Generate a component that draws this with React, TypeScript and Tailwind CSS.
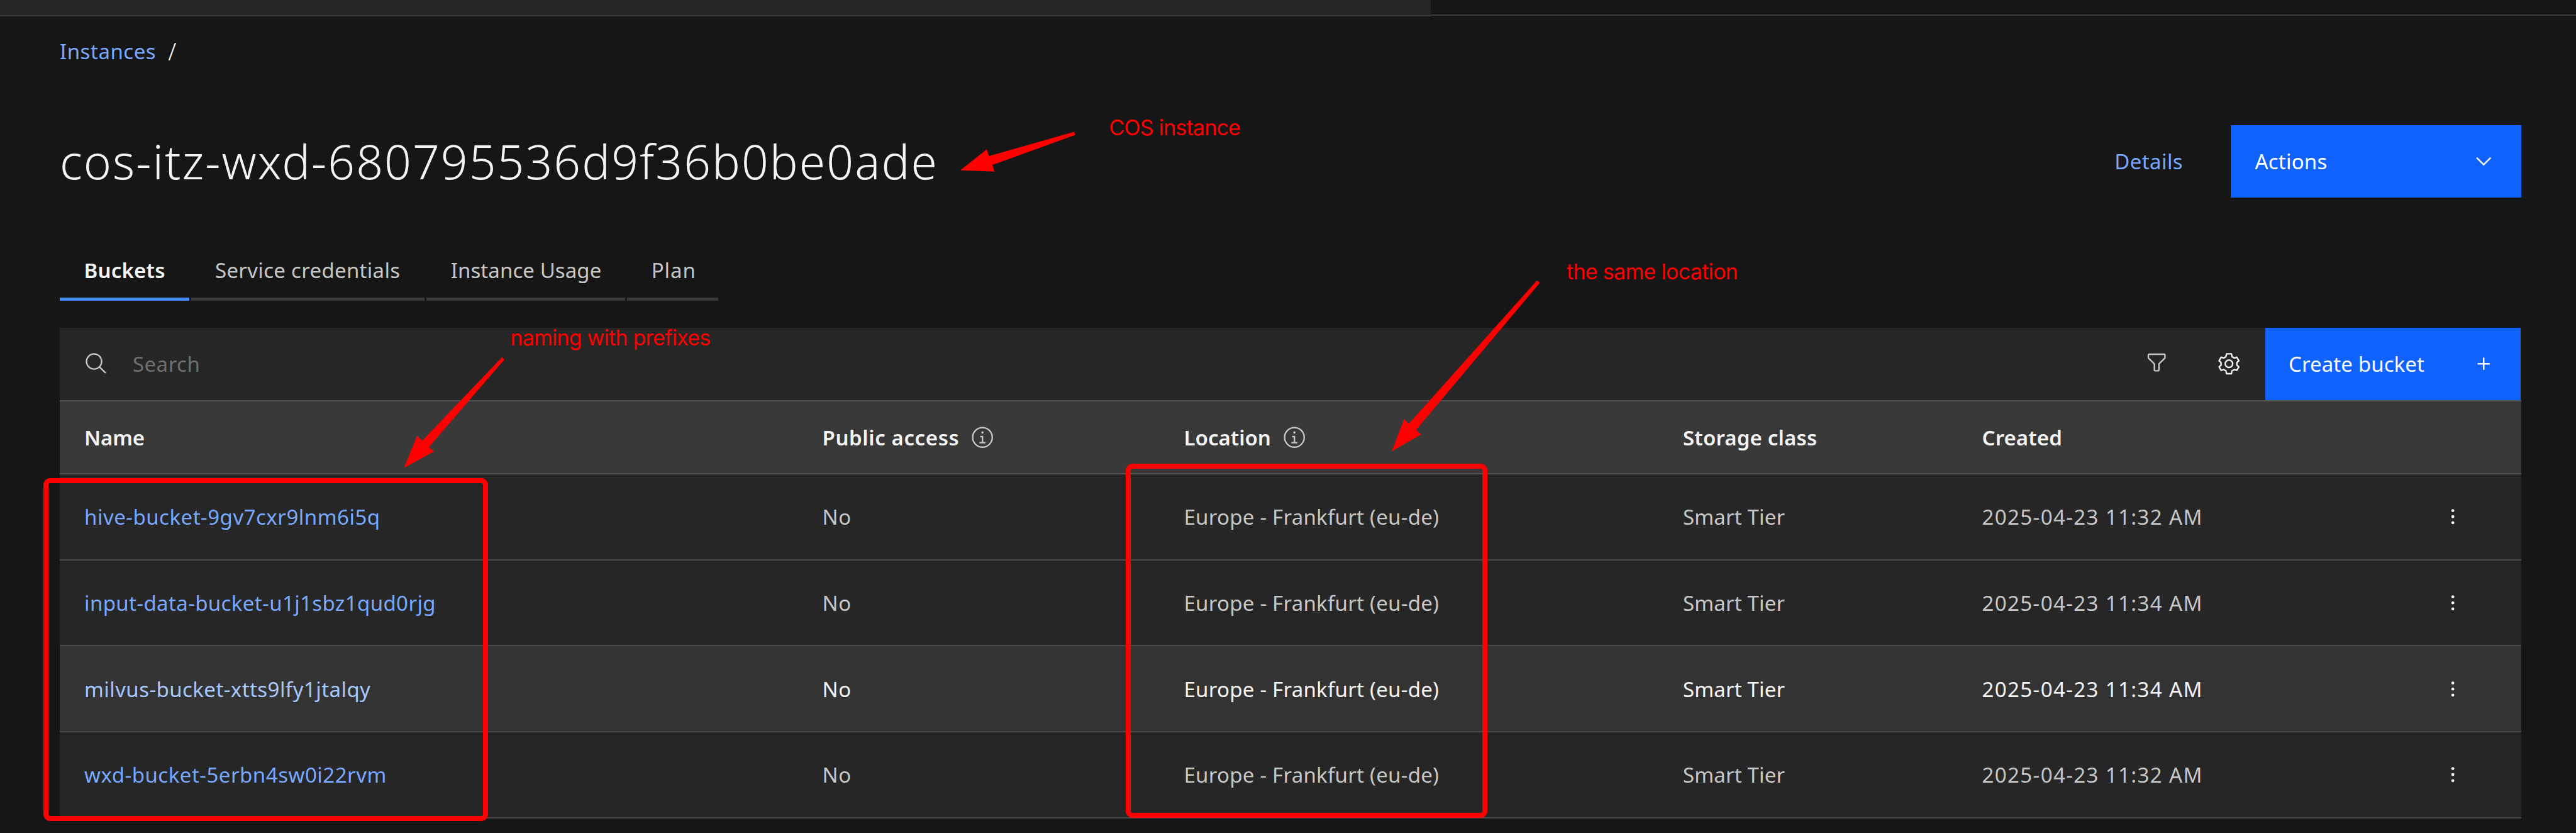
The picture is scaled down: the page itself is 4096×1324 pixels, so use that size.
import type { ReactNode } from "react";

type IconProps = { className?: string; children: ReactNode; box?: string };

function Icon({ className = "", children, box = "0 0 32 32" }: IconProps) {
  return (
    <svg viewBox={box} fill="currentColor" className={`size-[38.4px] shrink-0 ${className}`} aria-hidden="true">
      {children}
    </svg>
  );
}

function InfoIcon() {
  return (
    <Icon className="text-[#c6c6c6]">
      <path d="M17 22V14H13v2h2v6H12v2h8V22zM16 8a1.5 1.5 0 1 0 1.5 1.5A1.5 1.5 0 0 0 16 8z" />
      <path d="M16 30A14 14 0 1 1 30 16 14 14 0 0 1 16 30zM16 4A12 12 0 1 0 28 16 12 12 0 0 0 16 4z" />
    </Icon>
  );
}

function SearchIcon() {
  return (
    <Icon className="text-[#c6c6c6]">
      <path d="M29 27.586l-7.552-7.552a11.018 11.018 0 1 0-1.414 1.414L27.586 29zM4 13a9 9 0 1 1 9 9 9.01 9.01 0 0 1-9-9z" />
    </Icon>
  );
}

function FilterIcon() {
  return (
    <Icon className="-mt-[5px] text-[#c6c6c6]">
      <path d="M18 28H14a2 2 0 0 1-2-2V18.41L4.59 11A2 2 0 0 1 4 9.59V6A2 2 0 0 1 6 4H26a2 2 0 0 1 2 2V9.59A2 2 0 0 1 27.41 11L20 18.41V26A2 2 0 0 1 18 28zM6 6V9.59l8 8V26h4V17.59l8-8V6z" />
    </Icon>
  );
}

function SettingsIcon() {
  return (
    <Icon box="0 0 16 16" className="text-[#f4f4f4]">
      <path
        fill="none"
        stroke="currentColor"
        strokeWidth="1"
        strokeLinejoin="round"
        d="M6.4 1.4h3.2l.45 1.95q.75.3 1.4.85l1.75-.55 1.35 2.3-1.35 1.25q.15.8 0 1.6l1.35 1.25-1.35 2.3-1.75-.55q-.65.55-1.4.85l-.45 1.95h-3.2l-.45-1.95q-.75-.3-1.4-.85l-1.75.55-1.35-2.3 1.35-1.25q-.15-.8 0-1.6L1.45 5.95l1.35-2.3 1.75.55q.65-.55 1.4-.85z"
      />
      <circle cx="8" cy="8" r="2.45" fill="none" stroke="currentColor" strokeWidth="1" />
    </Icon>
  );
}

function ChevronIcon() {
  return (
    <Icon box="0 0 16 16">
      <path d="M8 11L3 6l.7-.7L8 9.6l4.3-4.3.7.7z" />
    </Icon>
  );
}

function AddIcon() {
  return (
    <Icon>
      <path d="M17 15V8H15v7H8v2h7v7h2V17h7V15z" />
    </Icon>
  );
}

function OverflowIcon() {
  return (
    <Icon className="text-[#f4f4f4]">
      <circle cx="16" cy="8" r="2" />
      <circle cx="16" cy="16" r="2" />
      <circle cx="16" cy="24" r="2" />
    </Icon>
  );
}

const tabs = [
  { label: "Buckets", look: "w-[205.5px] border-[#4589ff] font-semibold text-[#f4f4f4] tracking-[0.2px]" },
  { label: "Service credentials", look: "w-[371.7px] border-[#393939] text-[#c6c6c6] tracking-[0.3px]" },
  { label: "Instance Usage", look: "w-[316px] border-[#393939] text-[#c6c6c6] tracking-[0.08px]" },
  { label: "Plan", look: "w-[145px] border-[#393939] text-[#c6c6c6] tracking-[0.9px]" },
];

const buckets = [
  { name: "hive-bucket-9gv7cxr9lnm6i5q", track: "tracking-[0.5px]", created: "2025-04-23 11:32 AM", active: false },
  { name: "input-data-bucket-u1j1sbz1qud0rjg", track: "tracking-[0.38px]", created: "2025-04-23 11:34 AM", active: false },
  { name: "milvus-bucket-xtts9lfy1jtalqy", track: "tracking-[0.43px]", created: "2025-04-23 11:34 AM", active: true },
  { name: "wxd-bucket-5erbn4sw0i22rvm", track: "tracking-[0.5px]", created: "2025-04-23 11:32 AM", active: false },
];

const columns =
  "grid grid-cols-[1173.5px_575px_793.5px_475.5px_1fr_auto] items-center pl-[39px] pr-[89.5px]";

function TopBar() {
  return (
    <div className="flex h-[26px] items-start">
      <div className="h-[26px] w-[2275px] border-b-2 border-[#393939] bg-[#262626]" />
      <div className="h-[25px] flex-1 border-b-2 border-[#393939]" />
    </div>
  );
}

function Header() {
  return (
    <header className="mt-[97px] flex h-[116px] items-center">
      <h1 className="flex-1 text-[75px] leading-[90px] font-[350] tracking-[2.05px]">
        cos-itz-wxd-680795536d9f36b0be0ade
      </h1>
      <a className="mr-[76px] pt-px tracking-[0.4px] text-[#78a9ff]">Details</a>
      <button className="flex h-[115px] w-[462px] items-center justify-between bg-[#0f62fe] pr-[40.5px] pl-[38.5px] text-white">
        <span className="pt-px tracking-[0.2px]">Actions</span>
        <ChevronIcon />
      </button>
    </header>
  );
}

function Tabs() {
  return (
    <nav className="mt-[66px] flex gap-[3px]">
      {tabs.map((t) => (
        <div
          key={t.label}
          className={`flex h-[98px] items-center border-b-[5px] pt-[6px] pl-[38.5px] whitespace-nowrap ${t.look}`}
        >
          {t.label}
        </div>
      ))}
    </nav>
  );
}

function Toolbar() {
  return (
    <div className="mt-[43px] mr-px flex h-[115px] items-center bg-[#262626]">
      <div className="flex flex-1 items-center gap-[38.5px] pl-[39px] text-[#6f6f6f]">
        <SearchIcon />
        <span className="pt-px tracking-[0.5px]">Search</span>
      </div>
      <div className="grid w-[115px] place-items-center">
        <FilterIcon />
      </div>
      <div className="grid w-[115px] place-items-center">
        <SettingsIcon />
      </div>
      <button className="flex h-full w-[406px] items-center justify-between bg-[#0f62fe] pr-[39.5px] pl-[37px] text-white">
        <span className="pt-px tracking-[0.1px]">Create bucket</span>
        <AddIcon />
      </button>
    </div>
  );
}

function BucketTable() {
  return (
    <section>
      <div className={`${columns} h-[118px] border-y-2 border-[#525252] bg-[#393939] font-semibold`}>
        <span className="pt-px -tracking-[0.15px]">Name</span>
        <span className="flex items-center gap-[18px]">
          <span className="pt-px tracking-[0.6px]">Public access</span>
          <InfoIcon />
        </span>
        <span className="flex items-center gap-[18px]">
          <span className="pt-px">Location</span>
          <InfoIcon />
        </span>
        <span className="pt-px tracking-[0.17px]">Storage class</span>
        <span className="pt-px tracking-[0.1px]">Created</span>
      </div>
      {buckets.map((b) => (
        <div
          key={b.name}
          className={`${columns} h-[136.7px] border-b-2 border-[#4a4a4a] ${
            b.active ? "bg-[#333333] text-[#f4f4f4]" : "bg-[#262626] text-[#c6c6c6]"
          }`}
        >
          <a className={`pt-[2px] ${b.track} ${b.active ? "text-[#a6c8ff]" : "text-[#78a9ff]"}`}>{b.name}</a>
          <span className="pt-[2px] tracking-[0.6px]">No</span>
          <span className="pt-[2px] tracking-[0.25px]">Europe - Frankfurt (eu-de)</span>
          <span className="pt-[2px] tracking-[0.15px]">Smart Tier</span>
          <span className="pt-[2px] tracking-[1.4px]">{b.created}</span>
          <OverflowIcon />
        </div>
      ))}
    </section>
  );
}

const note = "absolute font-['Inter',sans-serif] text-[34px] leading-[40px] whitespace-nowrap text-[#ff0000]";

function Annotations() {
  return (
    <div className="pointer-events-none absolute inset-0">
      <svg viewBox="0 0 4441 1435" preserveAspectRatio="none" className="absolute inset-0 size-full" fill="#ff0000">
        <path d="M1655.4 293.5L1700.9 257.5 1705.4 268.9 1851.8 227.1 1853.6 232.5 1710.7 284.3 1714.3 295.7z" />
        <path d="M2399.2 777.6L2420.7 722.2 2428.7 730 2649.7 483.2 2654.9 486.9 2441.3 740.5 2449.9 748.4z" />
        <path d="M696.4 806L718.8 751.2 727.9 759.2 865.5 615.3 869.7 619.3 739.5 770 747.8 778z" />
      </svg>
      <div className="absolute top-[760px] left-[69px] h-[545px] w-[707px] rounded-[11px] border-[8px] border-[#ff0000]" />
      <div className="absolute top-[737px] left-[1790px] h-[563px] w-[575px] rounded-[11px] border-[8px] border-[#ff0000]" />
      <span className={`${note} top-[183px] left-[1763.5px] -tracking-[0.8px]`}>COS instance</span>
      <span className={`${note} top-[412px] left-[2491px] -tracking-[0.7px]`}>the same location</span>
      <span className={`${note} top-[517px] left-[811.5px] -tracking-[0.8px]`}>naming with prefixes</span>
    </div>
  );
}

export default function App() {
  return (
    <div className="relative h-[1324px] w-[4096px] overflow-hidden bg-[#161616] font-['Noto_Sans',sans-serif] text-[33px] leading-[40px] text-[#f4f4f4]">
      <TopBar />
      <main className="mr-[87px] ml-[95px]">
        <div className="mt-[35px] flex h-[40px] items-center">
          <a className="pt-px tracking-[0.52px] text-[#78a9ff]">Instances</a>
          <span className="ml-[19px] text-[38px] font-light">/</span>
        </div>
        <Header />
        <Tabs />
        <Toolbar />
        <BucketTable />
      </main>
      <Annotations />
    </div>
  );
}
